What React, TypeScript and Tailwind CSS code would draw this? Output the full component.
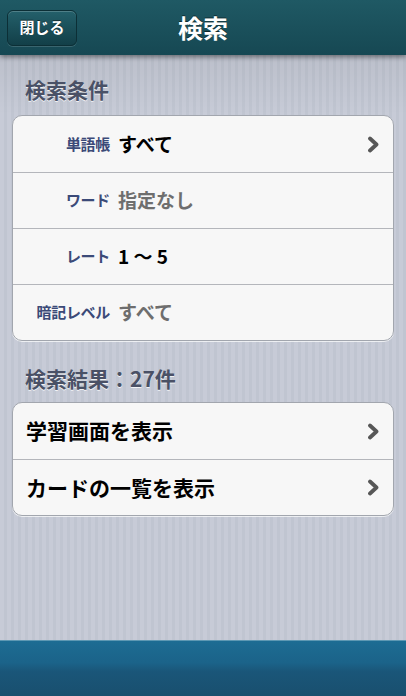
import React from "react";

const font = { fontFamily: '"Noto Sans CJK JP", "Noto Sans", sans-serif' };

function Chevron() {
  return (
    <svg width="13" height="17" viewBox="0 0 13 17" className="shrink-0">
      <polyline points="3,2.5 9.5,8.5 3,14.5" fill="none" stroke="#575757" strokeWidth="3.8" strokeLinecap="round" strokeLinejoin="round" />
    </svg>
  );
}

type Cond = { label: string; value: string; dim?: boolean; arrow?: boolean };

const conds: Cond[] = [
  { label: "単語帳", value: "すべて", arrow: true },
  { label: "ワード", value: "指定なし", dim: true },
  { label: "レート", value: "1 〜 5" },
  { label: "暗記レベル", value: "すべて", dim: true },
];

function CondRow({ c, first }: { c: Cond; first: boolean }) {
  return (
    <div className={`flex items-center h-[56px] pr-[13px] ${first ? "" : "border-t border-[#b4b6bb]"}`}>
      <div className="w-[97px] text-right text-[15px] font-bold text-[#3b4a78] tracking-[-0.3px]">{c.label}</div>
      <div className={`ml-[8px] flex-1 text-[19px] font-bold ${c.dim ? "text-[#6e6e6e]" : "text-black"}`}>{c.value}</div>
      {c.arrow && <Chevron />}
    </div>
  );
}

function ActionRow({ text, first }: { text: string; first: boolean }) {
  return (
    <div className={`flex items-center h-[56px] pl-[13px] pr-[13px] ${first ? "" : "border-t border-[#b4b6bb]"}`}>
      <div className="flex-1 text-[21px] font-bold text-black">{text}</div>
      <Chevron />
    </div>
  );
}

export default function App() {
  return (
    <div style={font} className="w-full h-[696px] flex flex-col overflow-hidden bg-[repeating-linear-gradient(90deg,#c7cbd7_0px,#c7cbd7_4px,#c0c5d1_4px,#c0c5d1_7px)]">
      <div className="relative z-10 h-[55px] shrink-0 flex items-center px-[7px] bg-gradient-to-b from-[#1f5964] to-[#164853] shadow-[0_2px_5px_rgba(0,0,0,0.45)]">
        <button className="w-[70px] h-[36px] rounded-[6px] border border-[#0c2f36] bg-gradient-to-b from-[#24606b] to-[#123f48] shadow-[inset_0_1px_0_rgba(255,255,255,0.2),0_1px_0_rgba(255,255,255,0.15)] text-white text-[15px] font-bold [text-shadow:0_-1px_0_rgba(0,0,0,0.5)]">
          閉じる
        </button>
        <div className="absolute left-0 right-0 text-center text-white text-[25px] font-bold pointer-events-none [text-shadow:0_-1px_0_rgba(0,0,0,0.5)]">
          検索
        </div>
      </div>

      <div className="flex-1 px-[12px] pt-[22px] bg-gradient-to-b from-[rgba(0,0,0,0.06)] to-transparent to-[60px] bg-no-repeat">
        <div className="pl-[13px] text-[21px] leading-6 font-bold text-[#4a5166] [text-shadow:0_1px_0_rgba(255,255,255,0.8)]">検索条件</div>
        <div className="mt-[14px] rounded-[10px] border border-[#a2a6ae] bg-[#f7f7f7] shadow-[0_1px_0_rgba(255,255,255,0.7)] overflow-hidden">
          {conds.map((c, i) => (
            <CondRow key={c.label} c={c} first={i === 0} />
          ))}
        </div>

        <div className="mt-[25px] pl-[13px] text-[21px] leading-6 font-bold text-[#4a5166] [text-shadow:0_1px_0_rgba(255,255,255,0.8)]">検索結果：27件</div>
        <div className="mt-[12px] rounded-[10px] border border-[#a2a6ae] bg-[#f7f7f7] shadow-[0_1px_0_rgba(255,255,255,0.7)] overflow-hidden">
          <ActionRow text="学習画面を表示" first />
          <ActionRow text="カードの一覧を表示" first={false} />
        </div>
      </div>

      <div className="h-[56px] shrink-0 border-t border-[#5e98b3] bg-[linear-gradient(180deg,#1d6c93_0%,#1b6389_40%,#1a5679_55%,#194f6e_100%)]" />
    </div>
  );
}
